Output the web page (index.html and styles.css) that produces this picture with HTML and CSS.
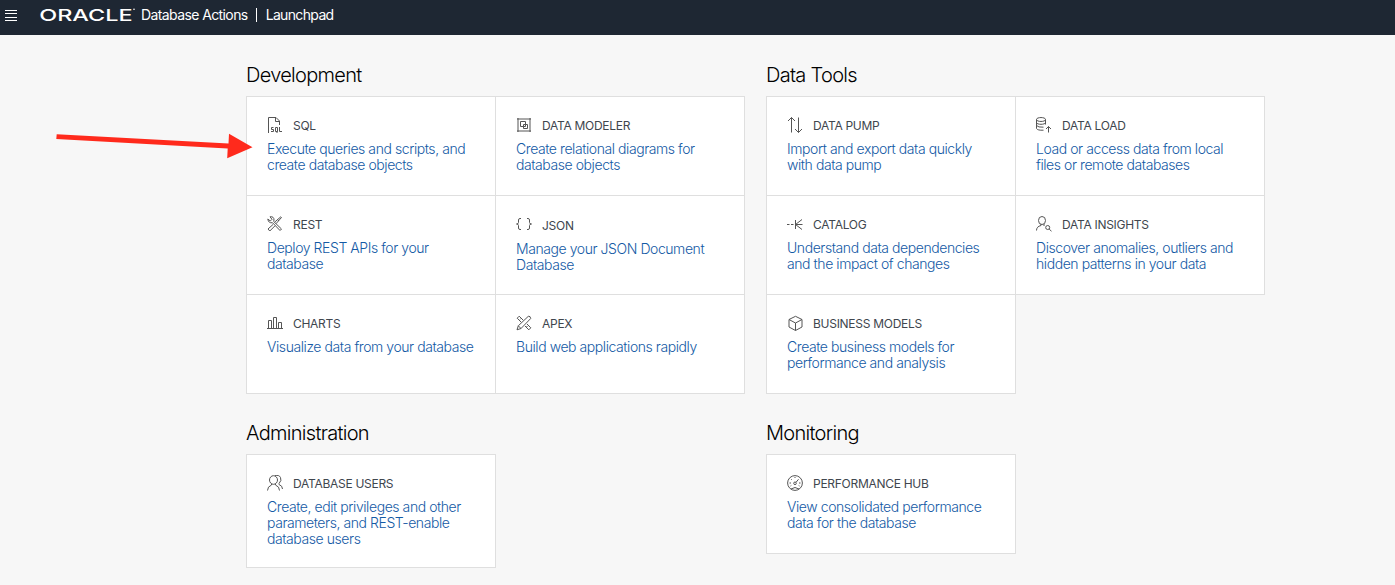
FILE: index.html
```html
<!DOCTYPE html>
<html lang="en">
<head>
<meta charset="utf-8">
<title>Database Actions | Launchpad</title>
<link rel="stylesheet" href="styles.css">
</head>
<body>
<header class="topbar">
  <svg class="menu" viewBox="0 0 12 11"><path d="M0 .5h12M0 3.5h12M0 7.5h12M0 10.5h12"/></svg>
  <svg class="brand" viewBox="0 0 96 24"><text class="brand-name" x="-.8" y="18" textLength="93.500" lengthAdjust="spacingAndGlyphs">ORACLE</text><circle cx="94" cy="6.300" r=".8"/></svg>
  <span class="product">Database Actions</span>
  <span class="divider"></span>
  <span class="page-name">Launchpad</span>
</header>
<main class="launchpad">
  <section class="group">
    <h2 class="heading">Development</h2>
    <div class="cards three">
      <a class="card"><h3 class="title"><svg class="icon" viewBox="0 0 16 16"><path d="M1.500 16V.5H9L12.500 4v4M8.500 .5V4.500H12.500M6.500 10.500H4.500V12.500H6.500V14.500H4M8.500 10.500h2v4h-2zM10 14v2M12.500 10v4.500H15"/></svg><span class="label">SQL</span></h3><p class="desc">Execute queries and scripts, and<br>create database objects</p></a>
      <a class="card"><h3 class="title"><svg class="icon" viewBox="0 0 16 16"><path d="M1 2h14M1 14h14M2 1v14M14 1v14M4.500 4.500h5v5h-5zM7.500 7.500h4v4h-4z"/></svg><span class="label">DATA MODELER</span></h3><p class="desc">Create relational diagrams for<br>database objects</p></a>
      <a class="card"><h3 class="title"><svg class="icon" viewBox="0 0 16 16"><path d="M3 .8Q7 .2 7 4L6.700 5.500 14.500 13 13 14.500 5.500 6.700Q1.500 7.500.8 3L3.300 5 5 3.300zM14.500 1.500L13.800.8 7.800 6M14.500 1.500L9 7.700M6 8.500L1 13l1.800 2L8 9.800M10.500 3.500l1.500 1.500"/></svg><span class="label">REST</span></h3><p class="desc">Deploy REST APIs for your<br>database</p></a>
      <a class="card shifted"><h3 class="title"><svg class="icon raised" viewBox="0 0 16 16"><path d="M5 2.500H4Q2.500 2.500 2.500 4v2.500Q2.500 8 .5 8q2 0 2 1.500V12q0 1.500 1.500 1.500h1M11 2.500h1q1.500 0 1.500 1.500v2.500q0 1.500 2 1.500-2 0-2 1.500V12q0 1.500-1.500 1.500h-1"/></svg><span class="label">JSON</span></h3><p class="desc">Manage your JSON Document<br>Database</p></a>
      <a class="card"><h3 class="title"><svg class="icon" viewBox="0 0 16 16"><path d="M0 13.500h16M1.500 13.500v-8h3v8M6.500 13.500v-11h3v11M11.500 13.500v-6h3v6"/></svg><span class="label">CHARTS</span></h3><p class="desc">Visualize data from your database</p></a>
      <a class="card"><h3 class="title"><svg class="icon" viewBox="0 0 16 16"><path d="M1.200 3.200l2-2 4 4M1.200 3.200l4 4M9 11l3.800 3.800 2-2L11 9M4.300 4.300l1-1M10.500 12l1-1M12.300 1.300Q14.500.8 14.700 3.500L5 13.500l-4 1.300 1.300-4zM2.300 10.800L5 13.500"/></svg><span class="label">APEX</span></h3><p class="desc">Build web applications rapidly</p></a>
    </div>
  </section>
  <section class="group">
    <h2 class="heading">Data Tools</h2>
    <div class="cards three">
      <a class="card"><h3 class="title"><svg class="icon" viewBox="0 0 16 16"><path d="M4.500 15.500V.5M1 4L4.500.5 8 4M11.500 .5v15M8 12l3.500 3.500L15 12"/></svg><span class="label">DATA PUMP</span></h3><p class="desc">Import and export data quickly<br>with data pump</p></a>
      <a class="card"><h3 class="title"><svg class="icon" viewBox="0 0 16 16"><path d="M.5 2.500c0-2.600 9-2.600 9 0s-9 2.600-9 0v9Q1.500 13.500 7.500 13.200M9.500 2.500v5M.5 5.500c0 2.400 9 2.400 9 0M.5 8.500Q2 10.500 7.500 10.200M12.500 15.500v-6M10 12l2.500-2.500L15 12"/></svg><span class="label">DATA LOAD</span></h3><p class="desc">Load or access data from local<br>files or remote databases</p></a>
      <a class="card"><h3 class="title"><svg class="icon" viewBox="0 0 16 16"><path d="M0 8.500h2.500M4 8.500h2.500M8 8.500h7.500M8.500 4v9M15 3.500L8.500 8.500l6.500 5"/></svg><span class="label">CATALOG</span></h3><p class="desc">Understand data dependencies<br>and the impact of changes</p></a>
      <a class="card"><h3 class="title"><svg class="icon" viewBox="0 0 16 16"><ellipse cx="6" cy="4.500" rx="3.500" ry="4"/><path d="M.5 14.500q0-4 4.500-5V8M8 8v2M13.200 13.200l2.300 2"/><circle cx="11.700" cy="11.500" r="2"/></svg><span class="label">DATA INSIGHTS</span></h3><p class="desc">Discover anomalies, outliers and<br>hidden patterns in your data</p></a>
      <a class="card"><h3 class="title"><svg class="icon" viewBox="0 0 16 16"><path d="M8.500 1.300L15 4.500v7.500l-6.500 3.500L2 12V4.500zM2 4.500L8.500 8 15 4.500M8.500 8v7.500"/></svg><span class="label">BUSINESS MODELS</span></h3><p class="desc">Create business models for<br>performance and analysis</p></a>
    </div>
  </section>
  <section class="group">
    <h2 class="heading">Administration</h2>
    <div class="cards tall">
      <a class="card"><h3 class="title"><svg class="icon" viewBox="0 0 16 16"><ellipse cx="6.500" cy="5" rx="4" ry="4.300"/><path d="M.5 15.500q0-4 4-5.500V9M8.500 9v1q4 1.500 4 5.500M8 .7Q12-.5 13.500 2.500T12 8.500v1q3.500 1.200 3.500 4.500"/></svg><span class="label">DATABASE USERS</span></h3><p class="desc">Create, edit privileges and other<br>parameters, and REST-enable<br>database users</p></a>
    </div>
  </section>
  <section class="group">
    <h2 class="heading">Monitoring</h2>
    <div class="cards">
      <a class="card"><h3 class="title"><svg class="icon" viewBox="0 0 16 16"><circle cx="8" cy="8" r="7.400"/><circle cx="8" cy="8.300" r="1.300"/><path d="M9 7.300l2.500-3M4 14q4-3 8 0M8 2v1M2.500 8H4M12 8h1.500M4 4l.7.7M3.500 11l.8-.5M12.500 11l-.8-.5"/></svg><span class="label">PERFORMANCE HUB</span></h3><p class="desc">View consolidated performance<br>data for the database</p></a>
    </div>
  </section>
</main>
<svg class="pointer" viewBox="0 0 200 30"><path d="M.7 4.300L172.500 13.400 173 3.700 196.500 17.200 171.200 28.200 171.700 18.500.3 9z"/></svg>
</body>
</html>
```
FILE: styles.css
```css
* { box-sizing: border-box; }
body {
  margin: 0;
  min-height: 585px;
  background: #f7f7f7;
  font-family: Inter, "Liberation Sans", sans-serif;
}
.topbar {
  display: flex;
  height: 35px;
  padding: 0 0 5px 5px;
  align-items: center;
  background: #1e2733;
  color: #fff;
  font-size: 14px;
  letter-spacing: -.6px;
}
.menu { width: 12px; height: 11px; margin-right: 23px; stroke: #fff; }
.brand { width: 96px; height: 24px; margin-right: 5px; overflow: visible; fill: #fff; }
.brand-name { font: 500 16.5px Inter, sans-serif; letter-spacing: 0; }
.product, .page-name { padding-bottom: 2px; }
.page-name { letter-spacing: -.65px; }
.divider { width: 1px; height: 14px; margin: 0 9px 0 8px; background: #fff; }
.launchpad {
  display: grid;
  grid-template-columns: 499px 499px;
  grid-template-rows: 358px auto;
  column-gap: 21px;
  padding: 27px 0 17px 246px;
}
.heading {
  height: 34px;
  margin: 0;
  color: #000;
  font-size: 20px;
  font-weight: 300;
  letter-spacing: -.7px;
  line-height: 26px;
}
.cards {
  display: grid;
  grid-template-columns: 249px 249px;
  grid-template-rows: 99px;
}
.three { grid-template-rows: repeat(3, 99px); }
.tall { grid-template-rows: 113px; }
.card {
  margin: 0 -1px -1px 0;
  padding: 20px 0 0 20px;
  border: 1px solid #dfdfdf;
  background: #fff;
}
.shifted { padding-top: 21px; }
.title {
  display: flex;
  align-items: center;
  gap: 10px;
  height: 16px;
  margin: 0 0 8px;
  color: #40464e;
  font-size: 12px;
  font-weight: 400;
  letter-spacing: -.28px;
  line-height: 16px;
}
.label { padding-top: 2px; }
.icon { flex: none; width: 16px; height: 16px; fill: none; stroke: #555; stroke-width: 1; }
.raised { margin-top: -3px; }
.desc {
  margin: 0;
  color: #145aa5;
  font-size: 14px;
  font-weight: 300;
  letter-spacing: -.43px;
  line-height: 16px;
  white-space: nowrap;
}
.pointer { position: absolute; left: 56px; top: 130px; width: 200px; height: 30px; fill: #ff2a1c; }
```
